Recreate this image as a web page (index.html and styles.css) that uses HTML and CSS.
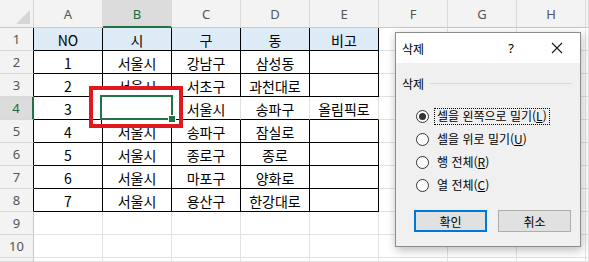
FILE: index.html
```html
<!DOCTYPE html>
<html lang="ko">
<head>
<meta charset="utf-8">
<title>삭제</title>
<link rel="stylesheet" href="styles.css">
</head>
<body>
<div class="sheet">
  <div class="corner"><svg width="16" height="16" viewBox="0 0 16 16"><polygon points="15,1 15,15 1,15" fill="#d6d6d6"/></svg></div>
  <div class="ch">A</div><div class="ch sel">B</div><div class="ch">C</div><div class="ch">D</div><div class="ch">E</div><div class="ch">F</div><div class="ch">G</div><div class="ch">H</div><div class="ch"></div>

  <div class="rh tl">1</div><div class="c t hd">NO</div><div class="c t hd">시</div><div class="c t hd">구</div><div class="c t hd">동</div><div class="c t hd">비고</div><div class="c"></div><div class="c"></div><div class="c"></div><div class="c"></div>

  <div class="rh tl">2</div><div class="c t">1</div><div class="c t">서울시</div><div class="c t">강남구</div><div class="c t">삼성동</div><div class="c t"></div><div class="c"></div><div class="c"></div><div class="c"></div><div class="c"></div>

  <div class="rh tl">3</div><div class="c t">2</div><div class="c t">서울시</div><div class="c t">서초구</div><div class="c t">과천대로</div><div class="c t"></div><div class="c"></div><div class="c"></div><div class="c"></div><div class="c"></div>

  <div class="rh tl rsel">4</div><div class="c t">3</div><div class="c t"></div><div class="c t nv">서울시</div><div class="c t nv">송파구</div><div class="c t nv">올림픽로</div><div class="c"></div><div class="c"></div><div class="c"></div><div class="c"></div>

  <div class="rh tl">5</div><div class="c t">4</div><div class="c t">서울시</div><div class="c t">송파구</div><div class="c t">잠실로</div><div class="c t"></div><div class="c"></div><div class="c"></div><div class="c"></div><div class="c"></div>

  <div class="rh tl">6</div><div class="c t">5</div><div class="c t">서울시</div><div class="c t">종로구</div><div class="c t">종로</div><div class="c t"></div><div class="c"></div><div class="c"></div><div class="c"></div><div class="c"></div>

  <div class="rh tl">7</div><div class="c t">6</div><div class="c t">서울시</div><div class="c t">마포구</div><div class="c t">양화로</div><div class="c t"></div><div class="c"></div><div class="c"></div><div class="c"></div><div class="c"></div>

  <div class="rh tl">8</div><div class="c t">7</div><div class="c t">서울시</div><div class="c t">용산구</div><div class="c t">한강대로</div><div class="c t"></div><div class="c"></div><div class="c"></div><div class="c"></div><div class="c"></div>

  <div class="rh">9</div><div class="c"></div><div class="c"></div><div class="c"></div><div class="c"></div><div class="c"></div><div class="c"></div><div class="c"></div><div class="c"></div><div class="c"></div>

  <div class="rh">10</div><div class="c"></div><div class="c"></div><div class="c"></div><div class="c"></div><div class="c"></div><div class="c"></div><div class="c"></div><div class="c"></div><div class="c"></div>

  <div class="rh"></div><div class="c"></div><div class="c"></div><div class="c"></div><div class="c"></div><div class="c"></div><div class="c"></div><div class="c"></div><div class="c"></div><div class="c"></div>
</div>

<div class="redbox"></div>
<div class="tick tick-h1"></div>
<div class="tick tick-h2"></div>
<div class="tick tick-v1"></div>
<div class="selection"><span class="handle"></span></div>

<div class="dialog">
  <div class="titlebar">
    <span class="title">삭제</span>
    <span class="help">?</span>
    <svg class="close" width="12" height="12" viewBox="0 0 12 12"><path d="M1 1 L11 11 M11 1 L1 11" stroke="#1a1a1a" stroke-width="1.1" fill="none"/></svg>
  </div>
  <div class="body">
    <div class="group"><span class="glabel">삭제</span><span class="gline"></span></div>
    <div class="options">
      <div class="opt"><span class="radio on"></span><span class="otext focus">셀을 왼쪽으로 밀기(<u>L</u>)</span></div>
      <div class="opt"><span class="radio"></span><span class="otext">셀을 위로 밀기(<u>U</u>)</span></div>
      <div class="opt"><span class="radio"></span><span class="otext">행 전체(<u>R</u>)</span></div>
      <div class="opt"><span class="radio"></span><span class="otext">열 전체(<u>C</u>)</span></div>
    </div>
    <div class="buttons">
      <button class="btn primary">확인</button>
      <button class="btn">취소</button>
    </div>
  </div>
</div>
</body>
</html>
```
FILE: styles.css
```css
html, body {
  margin: 0;
  padding: 0;
}
body {
  width: 589px;
  height: 262px;
  overflow: hidden;
  background: #ffffff;
  position: relative;
  font-family: "Noto Sans CJK KR", "Noto Sans", sans-serif;
}

.sheet {
  display: grid;
  grid-template-columns: 34px repeat(8, 69px) 3px;
  grid-template-rows: 28px repeat(10, 23px) 4px;
  overflow: hidden;
}
.sheet > div {
  box-sizing: border-box;
  border-right: 1px solid #e1e1e1;
  border-bottom: 1px solid #e1e1e1;
  display: flex;
  align-items: center;
  justify-content: center;
  overflow: hidden;
  white-space: nowrap;
}

.corner {
  background: #f3f3f3;
  align-items: flex-end !important;
  justify-content: flex-end !important;
  padding: 0 2px 2px 0;
  border-right-color: #d4d4d4 !important;
  border-bottom-color: #c8c8c8 !important;
}
.ch {
  background: #f3f3f3;
  color: #555555;
  font-family: "Noto Sans", sans-serif;
  font-size: 13px;
  border-right-color: #d9d9d9 !important;
  border-bottom-color: #c8c8c8 !important;
  padding-top: 1px;
}
.ch.sel {
  background: #dcdcdc;
  color: #1e6b41;
  border-bottom: 2px solid #217346 !important;
}
.rh {
  background: #f3f3f3;
  color: #555555;
  font-family: "Noto Sans", sans-serif;
  font-size: 13px;
  border-right-color: #c8c8c8 !important;
  border-bottom-color: #d9d9d9 !important;
}
.rh.tl {
  border-right-color: #000000 !important;
}
.rh.rsel {
  background: #dcdcdc;
  color: #1e6b41;
  border-right: 2px solid #217346 !important;
}

.c {
  font-size: 14px;
  color: #000000;
  padding-top: 1px;
}
.c.t {
  border-right-color: #000000;
  border-bottom-color: #000000;
}
.c.t.nv {
  border-right-color: #e1e1e1;
}
.c.hd {
  background: #ddebf7;
}

/* annotation box */
.redbox {
  position: absolute;
  left: 89px;
  top: 86px;
  width: 94px;
  height: 42px;
  box-sizing: border-box;
  border: 4px solid #e0191f;
  background: #ffffff;
}
.tick {
  position: absolute;
  background: #000000;
}
.tick-h1 { left: 93px; top: 119px; width: 8px; height: 1px; }
.tick-h2 { left: 174px; top: 119px; width: 5px; height: 1px; }
.tick-v1 { left: 101px; top: 120px; width: 1px; height: 4px; }

.selection {
  position: absolute;
  left: 100px;
  top: 95px;
  width: 73px;
  height: 25px;
  box-sizing: border-box;
  border: 2px solid #217346;
}
.handle {
  position: absolute;
  right: -5px;
  bottom: -5px;
  width: 6px;
  height: 6px;
  background: #217346;
  border: 1px solid #ffffff;
}

/* dialog */
.dialog {
  position: absolute;
  left: 395px;
  top: 32px;
  width: 186px;
  height: 215px;
  box-sizing: border-box;
  border: 1px solid #8c8c8c;
  background: #f0f0f0;
  box-shadow: 1px 3px 9px rgba(0, 0, 0, 0.28);
  display: flex;
  flex-direction: column;
  font-size: 12px;
  color: #000000;
}
.titlebar {
  height: 30px;
  background: #ffffff;
  display: flex;
  align-items: center;
  padding-left: 6px;
  flex-shrink: 0;
}
.title {
  flex: 1;
  font-size: 12px;
}
.help {
  width: 20px;
  text-align: center;
  font-family: "Noto Sans", sans-serif;
  font-size: 13px;
  margin-right: 30px;
}
.close {
  margin-right: 17px;
}
.body {
  flex: 1;
  display: flex;
  flex-direction: column;
  padding: 12px 8px 0 6px;
}
.group {
  display: flex;
  align-items: center;
  height: 16px;
}
.glabel {
  font-size: 12px;
  margin-right: 6px;
}
.gline {
  flex: 1;
  height: 1px;
  background: #d8d8d8;
}
.options {
  display: flex;
  flex-direction: column;
  margin-top: 14px;
  padding-left: 14px;
}
.opt {
  height: 23px;
  display: flex;
  align-items: center;
}
.radio {
  width: 13px;
  height: 13px;
  box-sizing: border-box;
  border: 1px solid #333333;
  border-radius: 50%;
  background: #ffffff;
  margin-right: 6px;
  flex-shrink: 0;
  display: flex;
  align-items: center;
  justify-content: center;
}
.radio.on::after {
  content: "";
  width: 7px;
  height: 7px;
  border-radius: 50%;
  background: #333333;
}
.otext {
  padding: 0 2px;
  line-height: 14px;
  height: 15px;
  box-sizing: border-box;
  white-space: nowrap;
}
.otext u {
  text-decoration-thickness: 1px;
  text-underline-offset: 1px;
}
.focus {
  outline: 1px dotted #000000;
  outline-offset: 0;
}
.buttons {
  display: flex;
  margin-top: 13px;
  padding-left: 12px;
  gap: 11px;
}
.btn {
  width: 73px;
  height: 22px;
  box-sizing: border-box;
  border: 1px solid #adadad;
  background: #e1e1e1;
  font-family: "Noto Sans CJK KR", sans-serif;
  font-size: 12px;
  color: #000000;
  padding: 0;
  margin: 0;
}
.btn.primary {
  border: 2px solid #0078d7;
}
```
